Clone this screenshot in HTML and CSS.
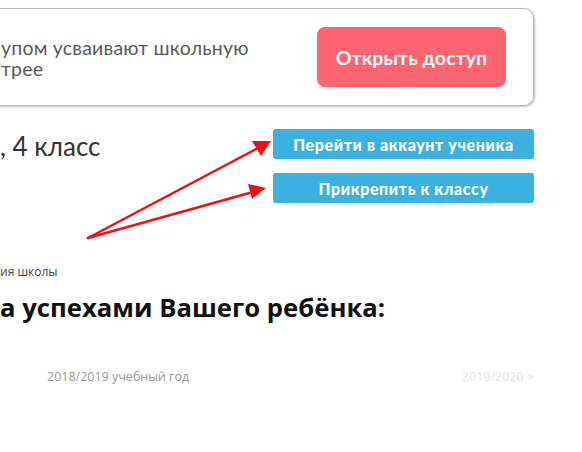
FILE: index.html
```html
<!DOCTYPE html>
<html lang="ru">
<head>
<meta charset="utf-8">
<link rel="stylesheet" href="styles.css">
</head>
<body>
<div class="page">
  <div class="card">
    <p class="card-text">упом усваивают школьную<br>трее</p>
    <a class="btn-red">Открыть доступ</a>
  </div>
  <div class="student">
    <div class="student-name">, 4 класс</div>
    <div class="actions">
      <a class="btn-blue">Перейти в аккаунт ученика</a>
      <a class="btn-blue">Прикрепить к классу</a>
    </div>
  </div>
  <div class="school">ия школы</div>
  <h2 class="title">а успехами Вашего ребёнка:</h2>
  <div class="years">
    <span class="year-current">2018/2019 учебный год</span>
    <span class="year-next">2019/2020 &gt;</span>
  </div>
  <svg class="arrows" width="582" height="452" viewBox="0 0 582 452">
    <g stroke="#f01010" stroke-width="2.5" fill="none" stroke-linecap="round">
      <line x1="88" y1="238" x2="258" y2="148"/>
      <line x1="88" y1="238" x2="253" y2="192"/>
    </g>
    <g fill="#f01010">
      <polygon points="271,141 252,141 261,156"/>
      <polygon points="266,188 248,184 252,199"/>
    </g>
  </svg>
</div>
</body>
</html>
```

FILE: styles.css
```css
html, body {
  margin: 0;
  padding: 0;
  background: #ffffff;
}
body {
  width: 582px;
  height: 452px;
  overflow: hidden;
}
.page {
  position: relative;
  width: 534px;
  padding-top: 8px;
}
.card {
  margin-left: -30px;
  height: 98px;
  box-sizing: border-box;
  border: 1.5px solid #b9b9b9;
  border-radius: 10px;
  box-shadow: 1px 1px 2px rgba(0, 0, 0, 0.25);
  display: flex;
  align-items: center;
  justify-content: space-between;
  padding: 0 27px 0 30px;
}
.card-text {
  margin: 2px 0 0 0;
  font-family: Lato, "Liberation Sans", sans-serif;
  font-size: 19.5px;
  line-height: 21px;
  letter-spacing: 0.2px;
  color: #5a5a5a;
}
.btn-red {
  display: flex;
  align-items: center;
  justify-content: center;
  width: 189px;
  height: 60px;
  background: #ff6471;
  border-radius: 8px;
  color: #ffffff;
  font-family: Lato, "Liberation Sans", sans-serif;
  font-weight: 700;
  font-size: 19.5px;
  letter-spacing: 0.1px;
}
.student {
  display: flex;
  justify-content: space-between;
  margin-top: 23px;
}
.student-name {
  margin-top: 1px;
  font-family: Lato, "Liberation Sans", sans-serif;
  font-size: 26px;
  color: #333333;
}
.actions {
  display: flex;
  flex-direction: column;
  gap: 14px;
  width: 261px;
}
.btn-blue {
  display: flex;
  align-items: center;
  justify-content: center;
  height: 30px;
  background: #3bb1df;
  border-radius: 3px;
  color: #ffffff;
  font-family: Lato, "Liberation Sans", sans-serif;
  font-weight: 900;
  font-size: 16px;
  letter-spacing: 0.6px;
}
.school {
  margin-top: 60px;
  font-family: "Open Sans", sans-serif;
  font-size: 12px;
  color: #444444;
}
.title {
  margin: 10px 0 0 0;
  font-family: "Open Sans", sans-serif;
  font-weight: 700;
  font-size: 25.7px;
  color: #111111;
}
.years {
  display: flex;
  justify-content: space-between;
  margin-top: 43px;
  padding-left: 47px;
  font-family: "Open Sans", sans-serif;
  font-size: 12.5px;
}
.year-current {
  color: #9a9a9a;
}
.year-next {
  color: #e2e2e2;
}
.arrows {
  position: absolute;
  left: 0;
  top: 0;
  pointer-events: none;
}
```
